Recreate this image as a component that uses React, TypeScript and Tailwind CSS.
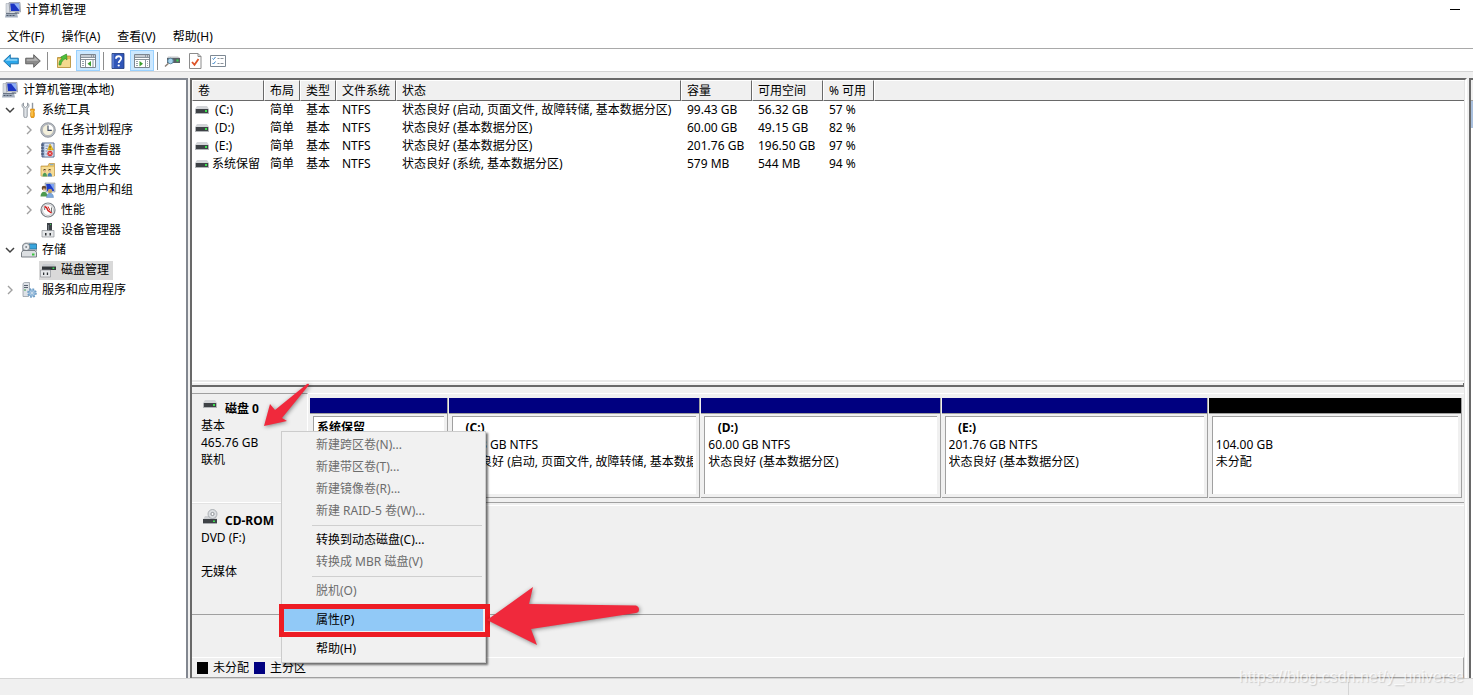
import type { ReactNode } from "react";
import clsx from "clsx";

/* ---------- icons ---------- */

function Svg({ children, size = 16 }: { children: ReactNode; size?: number }) {
  return (
    <svg width={size} height={size} viewBox="0 0 16 16" className="shrink-0" aria-hidden="true">
      {children}
    </svg>
  );
}

function ComputerIcon() {
  return (
    <Svg>
      <path d="M1 1.500h3.500V11H1z" fill="#d8dce2" stroke="#9aa1ab" strokeWidth="0.5" />
      <path d="M4 .5h11l.6 9.500H5z" fill="#c9ced6" stroke="#7f8794" strokeWidth="0.6" />
      <path d="M5.200 1.600h8.800l.5 7.400H6z" fill="#1c35c4" />
      <path d="M9 1.600h5l.5 7z" fill="#8fb0f4" />
      <path d="M10 10h3.500l1 2H9z" fill="#9098a6" />
      <path d="M1 11h11l1 4.500H0z" fill="#a3aebd" />
      <path d="M1 11h11v1H1z" fill="#6b7686" />
      <path d="M1.500 13.500h2M4.500 13.500h2M7.500 13.500h2" stroke="#4f5b6d" strokeWidth="1" />
    </Svg>
  );
}

function ToolsIcon() {
  return (
    <Svg>
      <path d="M2.500 1v3l2 1.500 2-1.500V1C8.500 2 8.500 5 6.200 6.400V14a1.700 1.700 0 0 1-3.400 0V6.400C.5 5 .5 2 2.500 1z" fill="#dfe3e7" stroke="#7d858e" strokeWidth="0.8" />
      <path d="M10.800.8h1.400v6h-1.400z" fill="#8f979f" />
      <path d="M9.600 7h3.800v2l-.6.800.6 1V14a1.900 1.900 0 0 1-3.800 0v-3.200l.6-1-.6-.8z" fill="#f3a81c" stroke="#c77a0b" strokeWidth="0.6" />
      <path d="M11 8v6" stroke="#ffe08a" strokeWidth="0.8" />
    </Svg>
  );
}

function ClockIcon() {
  return (
    <Svg>
      <circle cx="8" cy="8" r="7.300" fill="#b9bec5" stroke="#777d85" strokeWidth="0.7" />
      <circle cx="8" cy="8" r="5.600" fill="#f4f0dc" stroke="#9a9da2" strokeWidth="0.5" />
      <path d="M8 8h5.400A5.600 5.600 0 0 0 8 2.400z" fill="#fff" />
      <path d="M8 3.500V8.400h3.800" fill="none" stroke="#3d4a63" strokeWidth="1.100" />
    </Svg>
  );
}

function EventIcon() {
  return (
    <Svg>
      <path d="M2 1h12v14H2z" fill="#8fa5c9" stroke="#44587f" strokeWidth="0.9" />
      <path d="M4.500 1.500h9v13h-9z" fill="#dbe4f3" />
      <path d="M1 3h3M1 6h3M1 9h3M1 12h3" stroke="#34425f" strokeWidth="1" />
      <path d="M5.500 4h3M5.500 6.500h2M5.500 9h2M5.500 12h2" stroke="#6f84ab" strokeWidth="0.8" />
      <path d="M10 2l3.500 6h-6z" fill="#f6c92b" stroke="#b98c0b" strokeWidth="0.5" />
      <path d="M10 4v2.300M10 6.800v.8" stroke="#3b3000" strokeWidth="0.8" />
      <circle cx="10" cy="11.500" r="2.700" fill="#d93434" />
      <path d="M9 10.500l2 2M11 10.500l-2 2" stroke="#fff" strokeWidth="0.8" />
    </Svg>
  );
}

function SharedFolderIcon() {
  return (
    <Svg>
      <path d="M1 4h7l1-2.500h5.500V14H1z" fill="#e9c366" stroke="#bd9443" strokeWidth="0.7" />
      <path d="M1.500 5h12.500v9H1.500z" fill="#f6dc94" />
      <path d="M10 2.700h3.500" stroke="#6fa8dc" strokeWidth="1" />
      <path d="M3 8.500c.5-2 3-2 3 0zM8 8.500c.5-2 3-2 3 0z" fill="#59472c" />
      <circle cx="4.800" cy="9.300" r="1.200" fill="#e3b98e" />
      <circle cx="9.800" cy="9.300" r="1.200" fill="#e3b98e" />
      <path d="M2.500 14.500c0-5 4.500-5 4.500 0z" fill="#4e9b57" />
      <path d="M7.500 14.500c0-5 4.500-5 4.500 0z" fill="#4a82ba" />
    </Svg>
  );
}

function UsersIcon() {
  return (
    <Svg>
      <path d="M5 1h10v9H6z" fill="#c5ccd6" stroke="#828a96" strokeWidth="0.6" />
      <path d="M6.200 2h7.800v7H7z" fill="#1f3ec8" />
      <path d="M10 2h4v6z" fill="#7ea2f0" />
      <circle cx="4" cy="6" r="2.300" fill="#6b4a2c" />
      <path d="M3 6.500h2.500v2H3z" fill="#e5b58d" />
      <path d="M.5 14.500c0-6.500 7-6.500 7 0z" fill="#4d9a50" />
      <circle cx="10" cy="9" r="2.200" fill="#c9a45f" />
      <path d="M6.500 15.500c0-6 7-6 7 0z" fill="#7ba7dd" stroke="#4a76ac" strokeWidth="0.4" />
    </Svg>
  );
}

function PerformanceIcon() {
  return (
    <Svg>
      <circle cx="8" cy="8" r="7" fill="#fff" stroke="#7b8087" strokeWidth="1.200" />
      <circle cx="8" cy="8" r="5.500" fill="#fdfdfd" stroke="#b0b4b9" strokeWidth="0.8" />
      <path d="M4.700 8V5.500M11.500 10.500V5.500" stroke="#4c4c4c" strokeWidth="0.8" />
      <path d="M4.500 4.500l2 1 1.500 3 3.500 2.500" fill="none" stroke="#d01b1b" strokeWidth="1.500" />
      <path d="M8 4.500l2 4" stroke="#d01b1b" strokeWidth="0.9" />
    </Svg>
  );
}

function DeviceIcon() {
  return (
    <Svg>
      <path d="M7 1h5v8H7z" fill="#3d4247" />
      <path d="M10 2h1v1h-1z" fill="#35d04b" />
      <path d="M8 3h1v5H8z" fill="#727980" />
      <path d="M2 8.500h12V15H2z" fill="#e4e6e8" stroke="#8c9196" strokeWidth="0.7" />
      <path d="M5 11h1.500v2.500H5zM9.500 11H11v2.500H9.500z" fill="#2d3135" />
    </Svg>
  );
}

function StorageIcon() {
  return (
    <Svg>
      <path d="M1.500 3L4 1h9l2.500 1v7l-3 2h-11z" fill="#cfd3d8" stroke="#80868d" strokeWidth="0.6" />
      <path d="M8 2h7.600v5H8z" fill="#38a5dd" stroke="#24678f" strokeWidth="0.7" />
      <circle cx="5.200" cy="5" r="3.600" fill="#e6e9ec" stroke="#7d848b" strokeWidth="0.9" />
      <circle cx="5.200" cy="5" r="1" fill="#7d848b" />
      <path d="M.5 10.500l1.500-2h12l1.500 2V15H.5z" fill="#dcdfe2" stroke="#6e747b" strokeWidth="0.9" />
      <path d="M11 11.500h2.500v2H11z" fill="#3ac33f" />
    </Svg>
  );
}

function DiskMgmtIcon() {
  return (
    <Svg>
      <path d="M3 2h11l2 2.500H2z" fill="#c9ccd0" />
      <path d="M2 4.500h14V8H2z" fill="#33373b" />
      <path d="M12.500 5.500h1.800v1.500h-1.800z" fill="#37dc50" />
      <path d="M.5 8h10v7H.5z" fill="#e6e8ea" stroke="#8c9196" strokeWidth="0.7" />
      <path d="M3 10.500h1.300V13H3zM6.800 10.500h1.300V13H6.800z" fill="#2d3135" />
    </Svg>
  );
}

function ServicesIcon() {
  return (
    <Svg>
      <path d="M2 1.500L3.500.5h5v13l-1 1H2z" fill="#dde1e6" stroke="#8b929b" strokeWidth="0.7" />
      <path d="M3 3.500h4M3 5.500h4" stroke="#596270" strokeWidth="1" />
      <path d="M3 8h2" stroke="#3fa34d" strokeWidth="1" />
      <circle cx="11" cy="11" r="4" fill="none" stroke="#6c9cc6" strokeWidth="1.600" strokeDasharray="1.800 1.340" />
      <circle cx="11" cy="11" r="3.200" fill="#a9c8e4" stroke="#6c9cc6" strokeWidth="0.7" />
      <circle cx="11" cy="11" r="1.300" fill="#fff" stroke="#6c9cc6" strokeWidth="0.6" />
    </Svg>
  );
}

function DriveIcon() {
  return (
    <svg width="14" height="8" viewBox="0 0 14 8" className="shrink-0" aria-hidden="true">
      <path d="M2 0h10l2 3H0z" fill="#d3d5d8" />
      <path d="M0 3h14v4H0z" fill="#3e4246" />
      <path d="M0 3h1v4H0zM13 3h1v4h-1zM0 7h14v1H0z" fill="#b2b5b8" />
      <path d="M10 4h2v2h-2z" fill="#3ce04f" />
    </svg>
  );
}

function CdDriveIcon() {
  return (
    <svg width="15" height="15" viewBox="0 0 15 15" className="shrink-0" aria-hidden="true">
      <path d="M2 7h11l1 3.500H0z" fill="#cfd1d4" />
      <circle cx="9.500" cy="5" r="4.500" fill="#dcdfe2" stroke="#9da1a6" strokeWidth="0.8" />
      <circle cx="9.500" cy="5" r="1.600" fill="#fff" stroke="#85898e" strokeWidth="0.9" />
      <path d="M0 10h14v4H0z" fill="#3e4246" />
      <path d="M0 14h14v1H0z" fill="#a7aaae" />
      <path d="M10 11.500h2v1.500h-2z" fill="#3ce04f" />
    </svg>
  );
}

function ArrowIcon({ back }: { back?: boolean }) {
  return back ? (
    <Svg>
      <path d="M.7 8l6.600-6.300v3.500h8v5.600h-8v3.500z" fill="#2ba7ea" stroke="#176da6" strokeWidth="0.9" />
      <path d="M2.500 7.700l4-3.800v2.400h7.800v1.400z" fill="#8fd6fa" />
    </Svg>
  ) : (
    <Svg>
      <path d="M15.300 8L8.700 1.700v3.500h-8v5.600h8v3.500z" fill="#8b8b8b" stroke="#5b5b5b" strokeWidth="0.9" />
      <path d="M13.500 7.700l-4-3.800v2.400H1.700v1.400z" fill="#b8b8b8" />
    </Svg>
  );
}

function UpFolderIcon() {
  return (
    <Svg>
      <path d="M1.500 4.500h6l1-1.500h6v11.500h-13z" fill="#e6bb55" stroke="#b28a34" strokeWidth="0.8" />
      <path d="M2 6h12v8H2z" fill="#f4d98e" />
      <path d="M3 12c0-3.500 1-5.500 3-6.300L4.700 4 10.500 1l.5 6-1.600-1.300C7.500 6.500 5.500 8 4.800 12z" fill="#4fbf3a" stroke="#2c8a22" strokeWidth="0.6" />
    </Svg>
  );
}

function PaneIcon({ right }: { right?: boolean }) {
  return (
    <svg width="16" height="14" viewBox="0 0 16 14" aria-hidden="true">
      <path d="M.5.5h15v13H.5z" fill="#fff" stroke="#7c858f" />
      <path d="M1 1h14v2H1z" fill="#c6ccd3" />
      <path d="M11 2h1M13 2h1" stroke="#5e6771" />
      <path d="M1 3.500h14M1 5.500h14" stroke="#8b949d" />
      {right ? (
        <>
          <path d="M11.500 6v7" stroke="#8b949d" />
          <path d="M2 7.500h2M2 9.500h2M2 11.500h2M13 7.500h1M13 9.500h1M13 11.500h1" stroke="#9aa3ad" />
          <path d="M5.500 7l3.500 2.700-3.500 2.800z" fill="#3a9d2c" />
        </>
      ) : (
        <>
          <path d="M5.500 6v7M13 6v7" stroke="#8b949d" />
          <path d="M2 7.500h2M2 9.500h2M2 11.500h2" stroke="#9aa3ad" />
          <path d="M11 7v5.500L7.500 9.700z" fill="#3a9d2c" />
        </>
      )}
    </svg>
  );
}

function HelpIcon() {
  return (
    <Svg>
      <path d="M2 .5h12v15H2z" fill="#3056b8" stroke="#1d3779" strokeWidth="0.8" />
      <path d="M3 1v14" stroke="#7c9be6" strokeWidth="1" />
      <path d="M6 5.700c0-3.300 5.200-3.200 5.200-.2 0 2-2.500 2.200-2.500 4.600" fill="none" stroke="#fff" strokeWidth="1.800" />
      <circle cx="8.700" cy="12.500" r="1.100" fill="#fff" />
    </Svg>
  );
}

function ConnectIcon() {
  return (
    <Svg>
      <path d="M4 3.500h10l2 1.500H3z" fill="#c5c8cb" />
      <path d="M3 5h13v5H3z" fill="#5a6066" />
      <path d="M12.500 6.500h2v2h-2z" fill="#37dc50" />
      <circle cx="6.500" cy="8" r="2.800" fill="#a7d4ee" stroke="#557f99" strokeWidth="0.9" />
      <path d="M4.500 10.200L1 13.500" stroke="#8b8178" strokeWidth="1.500" />
    </Svg>
  );
}

function CheckDocIcon() {
  return (
    <Svg>
      <path d="M2.500.5H11L14 3.500v12H2.500z" fill="#fff" stroke="#8c8c8c" />
      <path d="M11 .5v3h3" fill="none" stroke="#8c8c8c" />
      <path d="M5 9l2.500 2.800L11.500 6" fill="none" stroke="#dd5327" strokeWidth="1.800" />
    </Svg>
  );
}

function ListIcon() {
  return (
    <svg width="16" height="12" viewBox="0 0 16 12" aria-hidden="true">
      <path d="M.5.500h15v11H.5z" fill="#fff" stroke="#7d8893" />
      <path d="M2.500 3.500l1 1 2-2.500M2.500 8l1 1 2-2.500" fill="none" stroke="#3b86c9" />
      <path d="M7.500 3.500h2M10.500 3.500h3M7.500 8.500h2M10.500 8.500h3" stroke="#8c949c" />
    </svg>
  );
}

/* ---------- data ---------- */

const menus = ["文件(F)", "操作(A)", "查看(V)", "帮助(H)"];

interface TreeNode {
  label: string;
  level: 1 | 2;
  icon: ReactNode;
  state?: "open" | "closed";
  selected?: boolean;
}

const tree: TreeNode[] = [
  { label: "系统工具", level: 1, icon: <ToolsIcon />, state: "open" },
  { label: "任务计划程序", level: 2, icon: <ClockIcon />, state: "closed" },
  { label: "事件查看器", level: 2, icon: <EventIcon />, state: "closed" },
  { label: "共享文件夹", level: 2, icon: <SharedFolderIcon />, state: "closed" },
  { label: "本地用户和组", level: 2, icon: <UsersIcon />, state: "closed" },
  { label: "性能", level: 2, icon: <PerformanceIcon />, state: "closed" },
  { label: "设备管理器", level: 2, icon: <DeviceIcon /> },
  { label: "存储", level: 1, icon: <StorageIcon />, state: "open" },
  { label: "磁盘管理", level: 2, icon: <DiskMgmtIcon />, selected: true },
  { label: "服务和应用程序", level: 1, icon: <ServicesIcon />, state: "closed" },
];

const columns = ["卷", "布局", "类型", "文件系统", "状态", "容量", "可用空间", "% 可用"];

const volumes = [
  ["\u00a0(C:)", "简单", "基本", "NTFS", "状态良好 (启动, 页面文件, 故障转储, 基本数据分区)", "99.43 GB", "56.32 GB", "57 %"],
  ["\u00a0(D:)", "简单", "基本", "NTFS", "状态良好 (基本数据分区)", "60.00 GB", "49.15 GB", "82 %"],
  ["\u00a0(E:)", "简单", "基本", "NTFS", "状态良好 (基本数据分区)", "201.76 GB", "196.50 GB", "97 %"],
  ["系统保留", "简单", "基本", "NTFS", "状态良好 (系统, 基本数据分区)", "579 MB", "544 MB", "94 %"],
];

const partitions = [
  { name: "系统保留", size: "", status: "" },
  { name: "\u00a0\u00a0\u00a0(C:)", size: "99.43 GB NTFS", status: "状态良好 (启动, 页面文件, 故障转储, 基本数据分区)" },
  { name: "\u00a0\u00a0\u00a0(D:)", size: "60.00 GB NTFS", status: "状态良好 (基本数据分区)" },
  { name: "\u00a0\u00a0\u00a0(E:)", size: "201.76 GB NTFS", status: "状态良好 (基本数据分区)" },
  { name: "\u00a0", size: "104.00 GB", status: "未分配", free: true },
];

const menuGroups = [
  [
    { label: "新建跨区卷(N)...", disabled: true },
    { label: "新建带区卷(T)...", disabled: true },
    { label: "新建镜像卷(R)...", disabled: true },
    { label: "新建 RAID-5 卷(W)...", disabled: true },
  ],
  [{ label: "转换到动态磁盘(C)..." }, { label: "转换成 MBR 磁盘(V)", disabled: true }],
  [{ label: "脱机(O)", disabled: true }],
  [{ label: "属性(P)", active: true }],
  [{ label: "帮助(H)" }],
] as { label: string; disabled?: boolean; active?: boolean }[][];

/* ---------- pieces ---------- */

function ToolButton({ label, pressed, narrow, children }: { label: string; pressed?: boolean; narrow?: boolean; children: ReactNode }) {
  return (
    <button
      aria-label={label}
      className={clsx(
        "flex h-[21px] items-center justify-center",
        narrow ? "w-[22px]" : "w-6",
        pressed && "border border-[#99d1ff] bg-[#cce8ff]"
      )}
    >
      {children}
    </button>
  );
}

function ToolSep() {
  return (
    <div className="flex w-[6px] justify-center">
      <div className="h-[18px] w-px bg-[#8d8d8d]" />
    </div>
  );
}

function Chevron({ state }: { state?: "open" | "closed" }) {
  return (
    <svg width="10" height="10" viewBox="0 0 10 10" className="shrink-0" aria-hidden="true">
      {state === "open" && <path d="M1 3l4 4 4-4" fill="none" stroke="#404040" strokeWidth="1.500" />}
      {state === "closed" && <path d="M3 1l4 4-4 4" fill="none" stroke="#a0a0a0" strokeWidth="1.400" />}
    </svg>
  );
}

function TreePane() {
  return (
    <aside className="w-[188px] shrink-0 border-t-2 border-r-2 border-[#828790] bg-white">
      <button className="flex h-5 items-center gap-[5px] pl-[2px]">
        <ComputerIcon />
        计算机管理(本地)
      </button>
      <ul>
        {tree.map((node) => (
          <li key={node.label} className={clsx("flex h-5 items-center", node.level === 1 ? "pl-[5px]" : "pl-6")}>
            <Chevron state={node.state} />
            <button
              className={clsx(
                "ml-[5px] flex h-[19px] items-center gap-[5px] pr-1 pl-px",
                node.selected && "bg-[#d9d9d9]"
              )}
            >
              {node.icon}
              {node.label}
            </button>
          </li>
        ))}
      </ul>
    </aside>
  );
}

function VolumeList() {
  return (
    <div className="min-h-0 flex-1 overflow-hidden bg-white">
      <table className="w-full table-fixed border-separate border-spacing-0 text-left whitespace-nowrap">
        <colgroup>
          <col className="w-[72px]" />
          <col className="w-[36px]" />
          <col className="w-[36px]" />
          <col className="w-[60px]" />
          <col className="w-[285px]" />
          <col className="w-[71px]" />
          <col className="w-[71px]" />
          <col className="w-[51px]" />
          <col />
        </colgroup>
        <thead>
          <tr className="h-[21px] bg-[#f0f0f0]">
            {columns.map((c) => (
              <th
                key={c}
                className="border-t border-r border-b border-l border-t-white border-r-[#696969] border-b-[#696969] border-l-white p-0 pl-[5px] font-normal"
              >
                {c}
              </th>
            ))}
            <td className="border-t border-b border-l border-t-white border-b-[#696969] border-l-white" />
          </tr>
        </thead>
        <tbody>
          {volumes.map((row) => (
            <tr key={row[0]} className="h-[18px]">
              {row.map((cell, i) => (
                <td key={i} className={clsx("p-0", i === 0 ? "pl-[3px]" : "pl-[6px]")}>
                  {i === 0 ? (
                    <span className="flex items-center gap-[3px]">
                      <DriveIcon />
                      {cell}
                    </span>
                  ) : (
                    cell
                  )}
                </td>
              ))}
              <td />
            </tr>
          ))}
        </tbody>
      </table>
    </div>
  );
}

function DiskGraph() {
  return (
    <div className="shrink-0 pt-[6px] leading-[17px]">
      {/* disk 0 */}
      <div className="flex h-[110px]">
        <div className="w-[116px] shrink-0 border-t border-r border-b border-t-[#a0a0a0] border-r-white border-b-white pt-[6px] pl-[9px]">
          <div className="flex gap-2 pl-[2px] font-bold">
            <DriveIcon />
            <span>磁盘 0</span>
          </div>
          <p>基本</p>
          <p>465.76 GB</p>
          <p>联机</p>
        </div>
        <div className="min-w-0 flex-1 border-t border-b border-t-white border-b-[#a0a0a0] pt-[4px] pr-[2px] pl-[2px]">
          <div className="grid h-[100px] grid-cols-[minmax(0,138fr)_minmax(0,251fr)_minmax(0,239fr)_minmax(0,266fr)_minmax(0,253fr)] gap-px">
            {partitions.map((p) => (
              <div key={p.name} className="flex flex-col border-r border-b border-[#a0a0a0]">
                <div className={clsx("h-[16px] border-b border-[#a0a0a0]", p.free ? "bg-black" : "bg-[#000080]")} />
                <div className="flex min-h-0 flex-1 p-[3px] pt-[2px]">
                  <div className="w-full border-t border-l border-[#a0a0a0] bg-white px-[3px] pt-[2px]">
                    <div className="overflow-hidden whitespace-nowrap">
                      <p className="font-bold">{p.name}</p>
                      <p>{p.size}</p>
                      <p>{p.status}</p>
                    </div>
                  </div>
                </div>
              </div>
            ))}
          </div>
        </div>
      </div>

      {/* optical drive */}
      <div className="flex h-[112px] border-b border-[#a0a0a0]">
        <div className="w-[116px] shrink-0 border-t border-r border-[#e3e3e3] pt-[5px] pl-[9px]">
          <div className="flex h-[20px] items-end gap-[7px] pl-[2px] font-bold">
            <span className="h-full">
              <CdDriveIcon />
            </span>
            <span>CD-ROM</span>
          </div>
          <p>DVD (F:)</p>
          <p className="pt-[17px]">无媒体</p>
        </div>
        <div className="mt-[2px] flex-1 border-t border-white" />
      </div>

      <div className="h-[42px]" />

      {/* legend */}
      <div className="flex h-[21px] items-center gap-[5px] border-t border-r border-b border-t-white border-r-[#a0a0a0] border-b-[#a0a0a0] pl-[5px]">
        <span className="h-3 w-[11px] bg-black" />
        <span>未分配</span>
        <span className="h-3 w-[11px] bg-[#000080]" />
        <span>主分区</span>
      </div>
    </div>
  );
}

function ContextMenu() {
  return (
    <div
      role="menu"
      className="absolute top-[431px] left-[281px] w-[205px] border border-[#ccc] bg-[#f1f1f1] p-[2px] shadow-[2px_2px_2px_rgba(0,0,0,0.55)]"
    >
      {menuGroups.map((group, g) => (
        <div key={g}>
          {g > 0 && <div className="my-[3px] mr-px ml-[28px] h-px bg-[#cfcfcf]" />}
          {group.map((item) => (
            <button
              key={item.label}
              role="menuitem"
              disabled={item.disabled}
              className={clsx(
                "flex h-[22px] w-full items-center pl-[32px]",
                item.disabled && "text-[#6d6d6d]",
                item.active && "bg-[#91c9f7]"
              )}
            >
              {item.label}
            </button>
          ))}
        </div>
      ))}
    </div>
  );
}

/* Red frame and arrows that point at the disk and at the menu entry */
function Annotations() {
  return (
    <>
      <div className="pointer-events-none absolute top-[604px] left-[279px] h-[33px] w-[211px] border-[5px] border-[#ed1c24]" />
      <svg
        width="390"
        height="280"
        viewBox="260 376 390 280"
        className="pointer-events-none absolute top-[376px] left-[260px] drop-shadow-[1px_1px_2px_rgba(0,0,0,0.45)]"
        aria-hidden="true"
      >
        <path d="M264 426l6-22 5 6 32-26q2-1 2 1l-27 33 5 3z" fill="#f0293c" />
        <path d="M487 620l46-33-4 17 107 1.500q3 1 3 4t-3 3.500l-105 16 6 16z" fill="#f0293c" />
      </svg>
    </>
  );
}

export default function App() {
  return (
    <div className="relative flex h-screen flex-col overflow-hidden bg-[#f0f0f0] font-['Noto_Sans','Noto_Sans_CJK_SC',sans-serif] text-[12px] leading-[18px] text-black">
      <header className="flex h-6 shrink-0 items-start bg-white pt-[1px] pl-[5px]">
        <h1 className="flex items-center gap-[5px]">
          <ComputerIcon />
          计算机管理
        </h1>
        <button aria-label="最小化" className="mt-[8px] mr-[13px] ml-auto h-px w-[10px] bg-black" />
      </header>

      <nav className="flex h-[25px] shrink-0 items-center gap-[17px] border-b border-[#a9a9a9] bg-white pt-[2px] pl-[7px]">
        {menus.map((m) => (
          <button key={m}>{m}</button>
        ))}
      </nav>

      <div className="flex h-[23px] shrink-0 items-end border-b border-[#d5d5d5] bg-white">
        <div className="flex items-center">
          <ToolButton label="后退" narrow><ArrowIcon back /></ToolButton>
          <ToolButton label="前进" narrow><ArrowIcon /></ToolButton>
          <ToolSep />
          <div className="w-[2px]" />
          <ToolButton label="上一级"><UpFolderIcon /></ToolButton>
          <ToolButton label="显示/隐藏控制台树" pressed><PaneIcon /></ToolButton>
          <ToolSep />
          <ToolButton label="帮助"><HelpIcon /></ToolButton>
          <ToolButton label="显示/隐藏操作窗格" pressed><PaneIcon right /></ToolButton>
          <ToolSep />
          <ToolButton label="连接"><ConnectIcon /></ToolButton>
          <ToolButton label="属性" narrow><CheckDocIcon /></ToolButton>
          <ToolButton label="列表"><ListIcon /></ToolButton>
        </div>
      </div>

      <div className="flex min-h-0 flex-1 gap-[2px] pt-[6px]">
        <TreePane />
        <main className="flex min-w-0 flex-1 flex-col border-t-2 border-r-2 border-l-2 border-t-[#696969] border-r-white border-l-[#696969]">
          <div className="flex min-h-0 flex-1 flex-col border-r border-[#e3e3e3]">
            <VolumeList />
            <div className="h-[2px] shrink-0 bg-[#e9e9e9]" />
            <div className="h-px shrink-0 bg-white" />
            <div className="h-[4px] shrink-0 border-r border-b-2 border-[#696969]" />
            <DiskGraph />
          </div>
        </main>
        <aside className="w-1 shrink-0 border-t-2 border-l-2 border-[#696969] bg-white">
          <div className="h-[21px] border-b border-[#a0a0a0] bg-[#f0f0f0]" />
          <div className="h-[27px] bg-[#a9c0de]" />
        </aside>
      </div>

      <footer className="flex h-[17px] shrink-0 border-t border-[#d5d5d5]">
        <div className="flex-1" />
        <div className="w-[125px] border-l border-[#d5d5d5]" />
      </footer>

      <ContextMenu />
      <Annotations />
      <span className="pointer-events-none absolute right-[9px] bottom-[9px] font-['Liberation_Sans',sans-serif] text-[16px] text-white/70 [text-shadow:1px_1px_1px_rgba(0,0,0,0.15)]">
        https://blog.csdn.net/y_universe
      </span>
    </div>
  );
}
